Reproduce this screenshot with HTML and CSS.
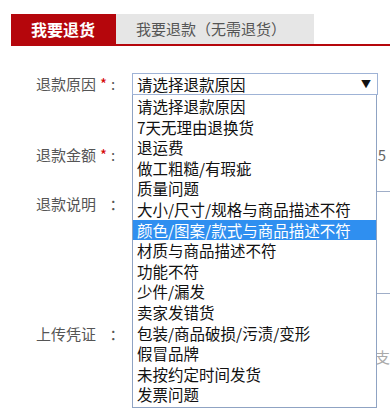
FILE: index.html
```html
<!DOCTYPE html>
<html lang="zh">
<head>
<meta charset="utf-8">
<link rel="stylesheet" href="styles.css">
</head>
<body>
<div class="page">
  <div class="tabs">
    <div class="tab active">我要退货</div>
    <div class="tab">我要退款（无需退货）</div>
  </div>
  <div class="form">
    <div class="row row-reason">
      <div class="label">退款原因<span class="req">*</span>:</div>
      <div class="field select-wrap">
        <div class="select">
          <span>请选择退款原因</span>
          <span class="arrow">▼</span>
        </div>
        <ul class="options">
          <li>请选择退款原因</li>
          <li>7天无理由退换货</li>
          <li>退运费</li>
          <li>做工粗糙/有瑕疵</li>
          <li>质量问题</li>
          <li>大小/尺寸/规格与商品描述不符</li>
          <li class="hl">颜色/图案/款式与商品描述不符</li>
          <li>材质与商品描述不符</li>
          <li>功能不符</li>
          <li>少件/漏发</li>
          <li>卖家发错货</li>
          <li>包装/商品破损/污渍/变形</li>
          <li>假冒品牌</li>
          <li>未按约定时间发货</li>
          <li>发票问题</li>
        </ul>
      </div>
    </div>
    <div class="row row-amount">
      <div class="label">退款金额<span class="req">*</span>:</div>
      <div class="field amount"><span class="amount-text">15</span></div>
    </div>
    <div class="row row-desc">
      <div class="label">退款说明 <span class="colon">：</span></div>
      <div class="field textarea"></div>
    </div>
    <div class="row row-upload">
      <div class="label">上传凭证 <span class="colon">：</span></div>
      <div class="field upload"><span class="hint">支</span></div>
    </div>
  </div>
</div>
</body>
</html>
```
FILE: styles.css
```css
html, body {
  margin: 0;
  padding: 0;
  background: #fff;
}
body {
  font-family: "Noto Sans CJK SC", "Liberation Sans", sans-serif;
  width: 390px;
  height: 420px;
  overflow: hidden;
}
.page {
  padding: 14px 0 0 11px;
}
.tabs {
  display: flex;
  height: 30px;
  border-bottom: 2px solid #b5060c;
}
.tab {
  height: 30px;
  line-height: 30px;
  font-size: 15px;
  color: #555;
  background: #e6e6e6;
  padding: 0 28px 0 20px;
}
.tab.active {
  background: #b5060c;
  color: #fff;
  font-weight: bold;
  font-size: 16px;
  padding: 0 21px 0 20px;
}
.form {
  padding-top: 27px;
}
.row {
  display: flex;
  align-items: flex-start;
}
.label {
  width: 96px;
  padding-left: 25px;
  font-size: 15px;
  color: #555;
  line-height: 22px;
  white-space: nowrap;
}
.req {
  color: #d40000;
  margin: 0 4px 0 4px;
}
.colon {
  margin-left: 10px;
}
.field {
  flex: 1;
}
.select-wrap {
  position: relative;
  width: 246px;
  flex: none;
}
.select {
  box-sizing: border-box;
  height: 22px;
  border: 1px solid #9fb3d6;
  display: flex;
  justify-content: space-between;
  align-items: center;
  padding: 0 6px 0 4px;
  font-size: 15.5px;
  color: #111;
  background: #fff;
  line-height: 20px;
}
.arrow {
  font-size: 10px;
  color: #111;
}
.options {
  position: absolute;
  left: 0;
  top: 22px;
  z-index: 5;
  box-sizing: border-box;
  width: 245px;
  margin: 0;
  padding: 1px 0 2px;
  list-style: none;
  background: #fff;
  border: 1px solid #8fa3c3;
  border-top: none;
}
.options li {
  height: 20.6px;
  line-height: 20.6px;
  padding-left: 4px;
  font-size: 15.5px;
  color: #111;
  white-space: nowrap;
}
.options li.hl {
  background: #2f8ff0;
  color: #fff;
}
.row-amount {
  margin-top: 49px;
}
.amount {
  height: 22px;
  display: flex;
  justify-content: flex-end;
}
.amount-text {
  padding-right: 4px;
  font-size: 15px;
  line-height: 22px;
  color: #666;
  white-space: nowrap;
}
.row-desc {
  margin-top: 25px;
}
.row-desc .label {
  line-height: 26px;
}
.textarea {
  height: 101px;
  border-top: 1px solid #a0aec8;
  border-bottom: 1px solid #a0aec8;
}
.row-upload {
  margin-top: 28px;
}
.row-upload .label {
  line-height: 24px;
}
.upload {
  padding-top: 24px;
  display: flex;
  justify-content: flex-end;
}
.hint {
  font-size: 15px;
  color: #aaa;
  padding-right: 0;
}
```
